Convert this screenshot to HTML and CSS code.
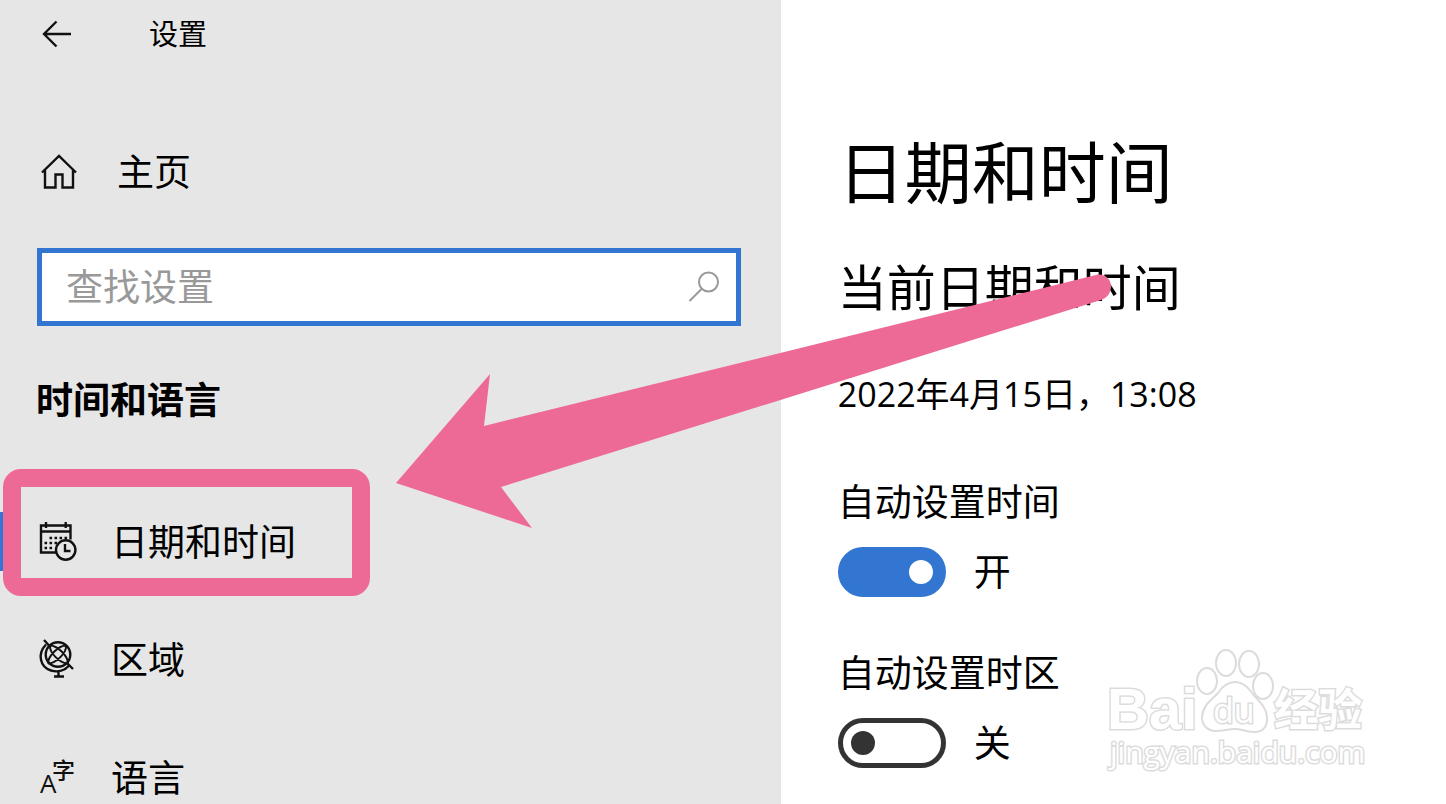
FILE: index.html
```
<!DOCTYPE html>
<html lang="zh-CN">
<head>
  <meta charset="UTF-8">
  <meta name="viewport" content="width=device-width, initial-scale=1.0">
  <title>设置</title>
  <link rel="stylesheet" href="styles.css">
</head>
<body>
  <div class="settings">
    <aside class="sidebar">
      <header class="titlebar">
        <button class="back" type="button" aria-label="返回">
          <svg width="32" height="28" viewBox="0 0 32 28"><path d="M30 14H3M15.500 1.500L3 14l12.500 12.500"/></svg>
        </button>
        <span class="app-name">设置</span>
      </header>

      <a class="home" href="#">
        <svg class="icon" width="36" height="36" viewBox="0 0 36 36"><path d="M1 18.500L18 2l17 16.500M4 16v17.500h10.500V20.500h7V33.500H32V16"/></svg>
        主页
      </a>

      <form class="search">
        <input class="search-input" type="text" placeholder="查找设置" aria-label="查找设置">
        <svg class="search-icon" width="32" height="32" viewBox="0 0 32 32"><circle cx="20.500" cy="11" r="9.500"/><path d="M13.500 18L1.500 30"/></svg>
      </form>

      <h2 class="group-title">时间和语言</h2>

      <nav class="menu">
        <a class="menu-item active" href="#">
          <svg class="icon" width="38" height="40" viewBox="0 0 38 40">
            <path d="M17 30.500H2V3.500h29.500v14M2 9.500h29.500M7 0v6M26.700 0v6"/>
            <path class="dots" d="M10.500 16h2.600M15.500 16h2.600M20.500 16h2.600M25.500 16h2.600M5.500 21h2.600M10.500 21h2.600M15.500 21h2.600M5.500 26h2.600M10.500 26h2.600"/>
            <circle class="dial" cx="26.700" cy="28" r="9.700"/>
            <path d="M26 22v7h5.500"/>
          </svg>
          日期和时间
          <span class="highlight"></span>
        </a>
        <a class="menu-item" href="#">
          <svg class="icon" width="38" height="40" viewBox="0 0 38 40">
            <circle cx="19" cy="14.500" r="12.300"/>
            <path d="M5 0l5 5.500M28 23l6 6M7 4.500C-2 14 1 27 12 30.500c7 2 14 0 18-5M19.500 31v6M15 36.500h10"/>
            <path class="thin" d="M11 5.500c7 0 18 10 18 18M11 5.500c-1 7 10 18 18 18M27 5.500c-7 0-18 10-18 18M27 5.500c1 7-10 18-18 18"/>
          </svg>
          区域
        </a>
        <a class="menu-item" href="#">
          <svg class="icon" width="38" height="40" viewBox="0 0 38 40">
            <text class="glyph-latin" x="1" y="35">A</text>
            <text class="glyph-han" x="13" y="21">字</text>
          </svg>
          语言
        </a>
      </nav>
    </aside>

    <main class="content">
      <h1 class="page-title">日期和时间</h1>
      <h2 class="section-title">当前日期和时间</h2>
      <p class="now">2022年4月15日，13:08</p>

      <div class="option">
        <label class="option-label" for="auto-time">自动设置时间</label>
        <div class="option-row">
          <input class="toggle" type="checkbox" id="auto-time" checked>
          <span>开</span>
        </div>
      </div>
      <div class="option">
        <label class="option-label" for="auto-zone">自动设置时区</label>
        <div class="option-row">
          <input class="toggle" type="checkbox" id="auto-zone">
          <span>关</span>
        </div>
      </div>
    </main>
  </div>

  <svg class="arrow" width="716" height="254" viewBox="0 0 716 254">
    <path d="M0 209L94 100L88 152L700 1C708 -1 715 5 715 12C715 19 711 24 705 26L105 213L136 254Z"/>
  </svg>

  <svg class="watermark" width="264" height="132" viewBox="0 0 264 132">
    <text class="wm-brand" x="1" y="83">Bai</text>
    <ellipse cx="101" cy="35" rx="10" ry="13"/>
    <ellipse cx="120" cy="17" rx="10" ry="13"/>
    <ellipse cx="143" cy="18" rx="10" ry="13"/>
    <ellipse cx="157" cy="40" rx="10" ry="13"/>
    <path d="M129 36c-8 0-13 5-17 11-5 6-15 11-16 24 0 8 5 14 14 14 7 0 12-2 19-2s12 3 20 3c8 0 13-6 12-15-1-12-10-17-15-24-4-6-9-11-17-11z"/>
    <text class="wm-du" x="107" y="77">du</text>
    <text class="wm-han" x="168" y="80">经验</text>
    <text class="wm-url" x="4" y="117">jingyan.baidu.com</text>
  </svg>
</body>
</html>
```
FILE: styles.css
```
:root {
  --accent: #3276d2;
  --pink: #ed6a96;
  --side-bg: #e6e6e6;
}
* {
  box-sizing: border-box;
}
body {
  margin: 0;
  height: 100vh;
  overflow: hidden;
  position: relative;
  background-color: #fff;
  color: #000;
  font-family: "Open Sans", "Noto Sans CJK SC", sans-serif;
  font-size: 37px;
  line-height: 48px;
}
h1, h2, p {
  margin: 0;
  font-weight: normal;
}
a {
  color: inherit;
  text-decoration: none;
}
svg {
  fill: none;
  stroke: #111;
  stroke-width: 2.4;
  flex-shrink: 0;
}
.settings {
  display: flex;
  min-height: 100%;
}

/* left column */
.sidebar {
  flex: 0 0 54%;
  background-color: var(--side-bg);
}
.titlebar {
  display: flex;
  align-items: center;
  gap: 76px;
  height: 68px;
  padding-left: 41px;
}
.back {
  display: flex;
  padding: 0;
  border: none;
  background: none;
  cursor: pointer;
}
.app-name {
  font-size: 29px;
}
.home {
  display: flex;
  align-items: center;
  gap: 40px;
  height: 72px;
  margin-top: 68px;
  padding-left: 41px;
}
.search {
  display: flex;
  align-items: center;
  height: 78px;
  margin: 40px 40px 0 37px;
  padding: 0 16px 0 24px;
  border: 5px solid var(--accent);
  background-color: #fff;
}
.search-input {
  flex: 1;
  min-width: 0;
  padding: 0;
  border: none;
  outline: none;
  background: none;
  font: inherit;
}
.search-input::placeholder {
  color: #999;
  opacity: 1;
}
.search-icon {
  stroke: #999;
  stroke-width: 2;
}
.group-title {
  margin-top: 50px;
  padding-left: 36px;
  font-size: 37px;
  font-weight: bold;
}
.menu {
  margin-top: 59px;
}
.menu-item {
  position: relative;
  display: flex;
  align-items: center;
  gap: 34px;
  height: 118px;
  padding-left: 39px;
}
.menu-item.active::before {
  content: "";
  position: absolute;
  left: 0;
  top: 29px;
  width: 8px;
  height: 59px;
  background-color: var(--accent);
}
.highlight {
  position: absolute;
  left: 3px;
  top: -14px;
  width: 367px;
  height: 127px;
  border: 18px solid var(--pink);
  border-radius: 18px;
}
.icon {
  overflow: visible;
}
.icon .dots {
  stroke-width: 2.6;
}
.icon .dial {
  fill: var(--side-bg);
}
.icon .thin {
  stroke-width: 2;
}
.icon text {
  fill: #111;
  stroke: none;
}
.glyph-latin {
  font-size: 26px;
}
.glyph-han {
  font-size: 23px;
  font-weight: 500;
}

/* right column */
.content {
  flex: 1;
  padding: 132px 40px 0 57px;
}
.page-title {
  font-size: 67px;
  line-height: 80px;
}
.section-title {
  margin-top: 45px;
  font-size: 49px;
  line-height: 60px;
}
.now {
  margin-top: 53px;
  font-size: 34px;
}
.option {
  margin-top: 60px;
}
.option + .option {
  margin-top: 52px;
}
.option-label {
  display: block;
}
.option-row {
  display: flex;
  align-items: center;
  gap: 28px;
  height: 50px;
  margin-top: 21px;
}
.toggle {
  appearance: none;
  display: flex;
  align-items: center;
  width: 108px;
  height: 50px;
  margin: 0;
  padding: 0 8px;
  border: 5px solid #333;
  border-radius: 25px;
  background-color: #fff;
  cursor: pointer;
}
.toggle::before {
  content: "";
  width: 24px;
  height: 24px;
  border-radius: 50%;
  background-color: #333;
}
.toggle:checked {
  justify-content: flex-end;
  border-color: var(--accent);
  background-color: var(--accent);
}
.toggle:checked::before {
  background-color: #fff;
}

/* pointer over both columns */
.arrow {
  position: absolute;
  left: 396px;
  top: 274px;
  overflow: visible;
  pointer-events: none;
}
.arrow path {
  fill: var(--pink);
  stroke: none;
}

.watermark {
  position: absolute;
  right: 76px;
  bottom: 26px;
  fill: #fff;
  stroke: #dcdcdc;
  stroke-width: 2;
  pointer-events: none;
}
.watermark text {
  paint-order: stroke;
  stroke-width: 3;
}
.wm-brand {
  font: bold 58px "Liberation Sans", sans-serif;
}
.wm-du {
  font: 34px "Open Sans", sans-serif;
}
.wm-han {
  font: bold 44px "Noto Sans CJK SC", sans-serif;
}
.wm-url {
  font: 30px "Open Sans", sans-serif;
}
```
